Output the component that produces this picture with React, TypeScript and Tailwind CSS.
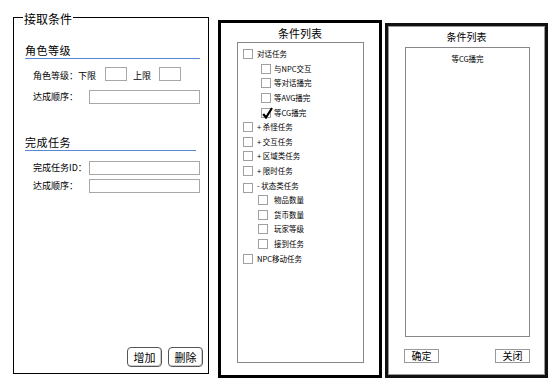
import React from "react";

const font = { fontFamily: '"Noto Sans CJK SC", "Noto Sans", sans-serif' };

function Box({ checked = false }: { checked?: boolean }) {
  return (
    <span className="relative inline-block w-[10px] h-[10px] shrink-0 border border-[#a0a0a0] bg-white">
      {checked && (
        <svg
          className="absolute left-[0px] top-[-2px]"
          width="11"
          height="12"
          viewBox="0 0 11 12"
        >
          <path d="M1.2 7 L4 10.5 L10 1" fill="none" stroke="#000" strokeWidth="2.2" strokeLinejoin="miter" />
        </svg>
      )}
    </span>
  );
}

type Item = { label: string; indent: number; gap: number; checked?: boolean; dy?: number };

const items: Item[] = [
  { label: "对话任务", indent: 5, gap: 4 },
  { label: "与NPC交互", indent: 23, gap: 3 },
  { label: "等对话播完", indent: 23, gap: 3 },
  { label: "等AVG播完", indent: 23, gap: 3 },
  { label: "等CG播完", indent: 23, gap: 3, checked: true },
  { label: "+ 杀怪任务", indent: 5, gap: 4 },
  { label: "+ 交互任务", indent: 5, gap: 4 },
  { label: "+ 区域类任务", indent: 5, gap: 4 },
  { label: "+ 限时任务", indent: 5, gap: 4 },
  { label: "- 状态类任务", indent: 5, gap: 4, dy: 2 },
  { label: "物品数量", indent: 20, gap: 6 },
  { label: "货币数量", indent: 20, gap: 6 },
  { label: "玩家等级", indent: 20, gap: 6 },
  { label: "接到任务", indent: 20, gap: 6 },
  { label: "NPC移动任务", indent: 5, gap: 4 },
];

function Input({ w }: { w: string }) {
  return <span className={`inline-block h-[14px] border border-[#a8a8a8] bg-white ${w}`} />;
}

export default function App() {
  return (
    <div className="w-[549px] h-[381px] bg-white text-black overflow-hidden flex items-start" style={font}>
      {/* Left panel */}
      <div className="relative ml-[13px] mt-[17px] w-[196px] h-[357px] border border-black flex flex-col">
        <span className="absolute left-[9px] top-[-6px] bg-white px-[1px] text-[12px] leading-[14px]">
          接取条件
        </span>
        <div className="pl-[11px] pt-[24px]">
          <div className="h-[16px] text-[11px] leading-[16px] tracking-[0.5px]">角色等级</div>
          <div className="w-[175px] h-[1px] bg-[#5a88d6]" />
          <div className="mt-[10px] pl-[8px] h-[14px] flex items-center text-[9px] leading-[14px]">
            <span>角色等级：下限</span>
            <span className="ml-[9px]"><Input w="w-[22px]" /></span>
            <span className="ml-[6px]">上限</span>
            <span className="ml-[8px]"><Input w="w-[22px]" /></span>
          </div>
          <div className="mt-[7px] pl-[8px] h-[14px] flex items-center text-[9px] leading-[14px]">
            <span className="w-[56px]">达成顺序：</span>
            <Input w="w-[111px]" />
          </div>
          <div className="mt-[30px] h-[16px] text-[11px] leading-[16px] tracking-[0.5px]">完成任务</div>
          <div className="w-[171px] h-[1px] bg-[#5a88d6]" />
          <div className="mt-[10px] pl-[8px] h-[14px] flex items-center text-[9px] leading-[14px]">
            <span className="w-[56px]">完成任务ID：</span>
            <Input w="w-[111px]" />
          </div>
          <div className="mt-[4px] pl-[8px] h-[14px] flex items-center text-[9px] leading-[14px]">
            <span className="w-[56px]">达成顺序：</span>
            <Input w="w-[111px]" />
          </div>
        </div>
        <div className="mt-auto mb-[6px] mr-[5px] flex justify-end gap-[6px]">
          <button className="w-[35px] h-[20px] rounded-[4px] border border-[#555] bg-white text-[11px] leading-[18px] shadow-[inset_-1px_-1px_0_#ccc]">
            增加
          </button>
          <button className="w-[35px] h-[20px] rounded-[4px] border border-[#555] bg-white text-[11px] leading-[18px] shadow-[inset_-1px_-1px_0_#ccc]">
            删除
          </button>
        </div>
      </div>

      {/* Middle panel */}
      <div className="ml-[9px] mt-[20px] w-[164px] h-[358px] border-[3px] border-black flex flex-col">
        <div className="h-[19px] flex items-center justify-center text-[11px] leading-[14px]">条件列表</div>
        <div className="ml-[16px] w-[127px] h-[321px] border border-[#888] pt-[4px]">
          {items.map((it) => (
            <div
              key={it.label}
              className="h-[14.6px] flex items-center text-[7.5px] leading-[10px]"
              style={{ paddingLeft: it.indent }}
            >
              <span style={{ transform: it.dy ? `translateY(${it.dy}px)` : undefined }} className="flex">
                <Box checked={it.checked} />
              </span>
              <span style={{ marginLeft: it.gap }}>{it.label}</span>
            </div>
          ))}
        </div>
      </div>

      {/* Right panel */}
      <div className="ml-[3px] mt-[23px] w-[163px] h-[355px] border-[3px] border-[#111] shadow-[inset_0_0_0_1px_#9a9a9a] flex flex-col">
        <div className="h-[21px] flex items-center justify-center text-[10px] leading-[14px]">条件列表</div>
        <div className="ml-[17px] w-[125px] h-[290px] border border-[#888] pt-[6px] text-center text-[7.5px] leading-[10px]">
          等CG播完
        </div>
        <div className="ml-[16px] mt-[12px] w-[126px] flex justify-between">
          <button className="w-[35px] h-[14px] border border-[#999] bg-white text-[10px] leading-[12px]">确定</button>
          <button className="w-[35px] h-[14px] border border-[#999] bg-white text-[10px] leading-[12px]">关闭</button>
        </div>
      </div>
    </div>
  );
}
